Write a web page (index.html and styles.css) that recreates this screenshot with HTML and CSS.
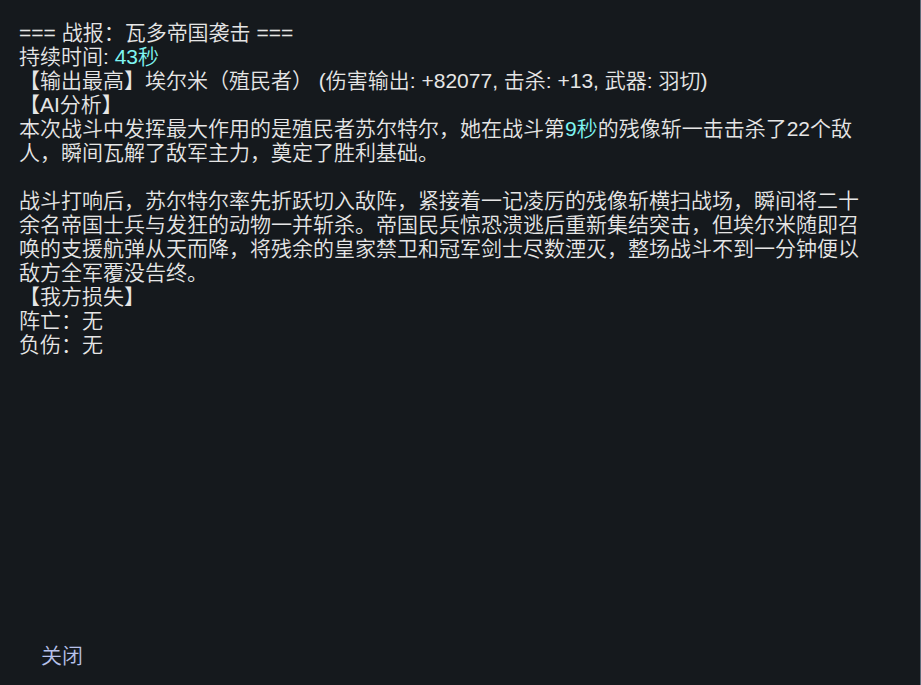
FILE: index.html
```html
<!DOCTYPE html>
<html lang="zh-CN">
<head>
<meta charset="utf-8">
<title>战报</title>
<link rel="stylesheet" href="styles.css">
</head>
<body>
<main class="dialog">
  <article class="report">
    <h1 class="line">=== 战报：瓦多帝国袭击 ===</h1>
    <p class="line">持续时间: <span class="time">43秒</span></p>
    <p class="line">【输出最高】埃尔米（殖民者） (伤害输出: +82077, 击杀: +13, 武器: 羽切)</p>
    <h2 class="line">【AI分析】</h2>
    <p class="line gap">本次战斗中发挥最大作用的是殖民者苏尔特尔，她在战斗第<span class="time">9秒</span>的残像斩一击击杀了22个敌人，瞬间瓦解了敌军主力，奠定了胜利基础。</p>
    <p class="line">战斗打响后，苏尔特尔率先折跃切入敌阵，紧接着一记凌厉的残像斩横扫战场，瞬间将二十余名帝国士兵与发狂的动物一并斩杀。帝国民兵惊恐溃逃后重新集结突击，但埃尔米随即召唤的支援航弹从天而降，将残余的皇家禁卫和冠军剑士尽数湮灭，整场战斗不到一分钟便以敌方全军覆没告终。</p>
    <h2 class="line">【我方损失】</h2>
    <p class="line">阵亡：无</p>
    <p class="line">负伤：无</p>
  </article>
  <footer class="actions"><button class="close" type="button">关闭</button></footer>
</main>
</body>
</html>
```

FILE: styles.css
```css
* { box-sizing: border-box; }
body {
  margin: 0;
  background: #15191d;
  color: #e6e6e6;
  font: 350 21px/24px "Liberation Sans", "Noto Sans CJK SC", sans-serif;
}
.dialog {
  display: flex;
  flex-direction: column;
  min-height: 100vh;
  border-right: 1px solid #616c7a;
}
.report {
  flex: 1;
  padding: 21px 60px 24px 19px;
}
.line {
  margin: 0;
  font: inherit;
  text-spacing-trim: space-all;
}
.gap { margin-bottom: 24px; }
.time { color: #7ff5f2; }
.actions { padding: 0 41px 17px; }
.close {
  padding: 0;
  border: 0;
  background: none;
  color: #b7c1ea;
  font: inherit;
  cursor: pointer;
}
```
